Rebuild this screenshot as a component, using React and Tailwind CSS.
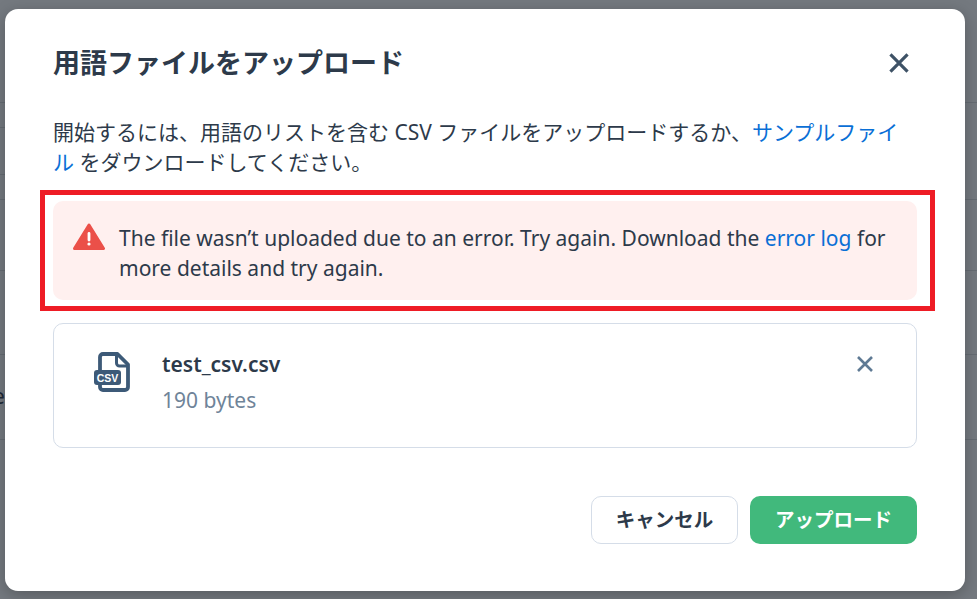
import React from "react";

const font = { fontFamily: '"Noto Sans", "Noto Sans CJK JP", sans-serif' };

function CsvIcon() {
  return (
    <svg width="40" height="42" viewBox="0 0 40 42" fill="none">
      <path d="M7 19V6a3 3 0 0 1 3-3h14.5L35 13.5V36a3 3 0 0 1-3 3H10a3 3 0 0 1-3-3v-2" stroke="#3d5a78" strokeWidth="3.8" strokeLinejoin="round" />
      <path d="M23.5 4v8a3 3 0 0 0 3 3H34" stroke="#3d5a78" strokeWidth="3" strokeLinejoin="round" />
      <rect x="1" y="19" width="27" height="15" rx="3" fill="#3d5a78" />
      <text x="14.5" y="30.5" textAnchor="middle" fontSize="10.5" fontWeight="700" fill="#fff" fontFamily="Liberation Sans">CSV</text>
    </svg>
  );
}

function XIcon({ size, color, width }) {
  return (
    <svg width={size} height={size} viewBox="0 0 18 18" fill="none">
      <path d="M2 2l14 14M16 2L2 16" stroke={color} strokeWidth={width} />
    </svg>
  );
}

export default function App() {
  return (
    <div className="relative h-[599px] w-[977px] overflow-hidden bg-[#74797f]" style={font}>
      <div className="flex flex-col">
        <div className="h-[103px] border-b border-[#666c73]" />
        <div className="h-[25px] w-[100px] border-b border-[#666c73]" />
        <div className="h-[47px] w-[100px] border-b border-[#666c73]" />
        <div className="h-[25px] border-b border-[#666c73]" />
        <div className="h-[71px] border-b border-[#666c73]" />
        <div className="h-[84px] border-b border-[#666c73]" />
        <div className="flex h-[85px] items-center border-b border-[#666c73] text-[21px] text-[#1f2937]">
          <span className="-ml-[7px]">e</span>
        </div>
      </div>

      <div className="absolute left-[5px] top-[9px] flex h-[582px] w-[960px] flex-col rounded-[13px] bg-white px-[48px] pt-[32px] shadow-[0_4px_16px_rgba(0,0,0,0.25)]">
        <div className="flex h-[44px] items-center justify-between">
          <h2 className="text-[27px] font-bold leading-[44px] text-[#2d3a4a]">用語ファイルをアップロード</h2>
          <span className="mr-[7px]"><XIcon size={22} color="#3e5266" width={2.6} /></span>
        </div>

        <p className="mt-[32px] text-[21px] leading-[30px] text-[#2d3a4a]">
          開始するには、用語のリストを含む CSV ファイルをアップロードするか、<span className="text-[#0a6fd6]">サンプルファイル</span> をダウンロードしてください。
        </p>

        <div className="mt-[24px] flex h-[99px] items-start gap-[13px] rounded-[10px] bg-[#fff0ef] pl-[19px] pr-[20px] pt-[22px]">
          <svg className="shrink-0" width="34" height="30" viewBox="0 0 34 30">
            <path d="M17 2L31.5 25.5H2.5Z" fill="#eb5049" stroke="#eb5049" strokeWidth="3" strokeLinejoin="round" />
            <rect x="15.6" y="9" width="2.8" height="9.5" rx="1.4" fill="#fff" />
            <circle cx="17" cy="21" r="1.6" fill="#fff" />
          </svg>
          <p className="text-[21px] leading-[30px] text-[#2d3a4a]">
            The file wasn’t uploaded due to an error. Try again. Download the <span className="text-[#0a6fd6]">error log</span> for more details and try again.
          </p>
        </div>

        <div className="mt-[23px] flex h-[125px] items-start justify-between rounded-[10px] border border-[#d5dde8] pl-[39px] pr-[42px] pt-[23px]">
          <div className="flex items-start gap-[29px]">
            <div className="mt-[4px]"><CsvIcon /></div>
            <div>
              <div className="text-[21px] font-semibold leading-[34px] text-[#2d3a4a]">test_csv.csv</div>
              <div className="mt-[2px] text-[21px] leading-[34px] text-[#6f8499]">190 bytes</div>
            </div>
          </div>
          <span className="mt-[8px]"><XIcon size={18} color="#5f7a94" width={2.6} /></span>
        </div>

        <div className="mt-[48px] flex justify-end gap-[12px]">
          <button className="flex h-[48px] w-[147px] items-center justify-center rounded-[10px] border border-[#d5dde8] bg-white text-[19.5px] font-bold text-[#2d3a4a]">キャンセル</button>
          <button className="flex h-[48px] w-[167px] items-center justify-center rounded-[10px] bg-[#41b97c] text-[19.5px] font-bold text-white">アップロード</button>
        </div>
      </div>

      <div className="pointer-events-none absolute left-[40px] top-[190px] h-[121px] w-[895px] border-[5px] border-[#ee1c25]" />
    </div>
  );
}
